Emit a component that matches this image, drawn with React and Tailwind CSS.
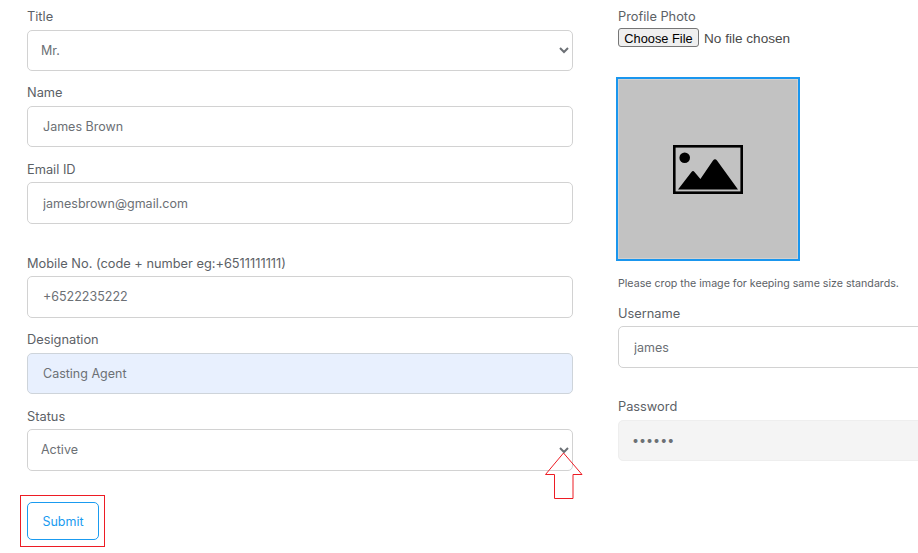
import React from "react";

function Label({ children }) {
  return <label className="block text-[12.8px] leading-[20px] text-[#5c6166]">{children}</label>;
}

function TextInput({ value, tone = "plain", type = "text", extra = "h-[41px]" }) {
  const toneClass =
    tone === "blue"
      ? "bg-[#e8f0fe] border-[#ced4da]"
      : tone === "gray"
      ? "bg-[#f4f4f4] border-[#eeeeee]"
      : "bg-white border-[#d2d2d2]";
  return (
    <input
      readOnly
      type={type}
      value={value}
      className={`block w-full rounded-[5px] border pr-[15px] text-[12.5px] text-[#6c7075] outline-none ${toneClass} ${extra}`}
    />
  );
}

function SelectBox({ value, options, extra = "h-[41px]" }) {
  return (
    <select
      defaultValue={value}
      className={`block w-full rounded-[5px] border border-[#d2d2d2] bg-white pl-[9px] pr-[4px] text-[12.5px] text-[#6c7075] outline-none ${extra}`}
    >
      {options.map((o) => (
        <option key={o}>{o}</option>
      ))}
    </select>
  );
}

function ImageIcon() {
  return (
    <svg width="70" height="49" viewBox="0 0 70 49" aria-hidden="true">
      <rect x="1.3" y="1.3" width="67.4" height="46.4" fill="none" stroke="#000" strokeWidth="2.6" />
      <circle cx="11.7" cy="12.7" r="5.3" fill="#000" />
      <path d="M5 44.5 L18.5 27 Q20 25 21.5 27 L27.4 34 L40 15.5 Q42 13 44 15.5 L65 44.5 Z" fill="#000" />
    </svg>
  );
}

export default function App() {
  return (
    <div className="relative h-[553px] w-[918px] overflow-hidden bg-white font-['Inter',sans-serif]">
      <div className="flex pt-[7px]">
        <div className="ml-[27px] w-[546px] shrink-0">
          <Label>Title</Label>
          <div className="mt-[3px]">
            <SelectBox value="Mr." options={["Mr.", "Mrs.", "Ms."]} />
          </div>
          <div className="mt-[12px]"><Label>Name</Label></div>
          <div className="mt-[3px]"><TextInput value="James Brown" extra="h-[41px] pl-[15px]" /></div>
          <div className="mt-[13px]"><Label>Email ID</Label></div>
          <div className="mt-[2px]"><TextInput value="jamesbrown@gmail.com" extra="h-[42px] pl-[15px]" /></div>
          <div className="mt-[30px]"><Label>Mobile No. (code + number eg:+6511111111)</Label></div>
          <div className="mt-[2px]"><TextInput value="+6522235222" extra="h-[42px] pl-[15px] pb-[2px]" /></div>
          <div className="mt-[12px]"><Label>Designation</Label></div>
          <div className="mt-[3px]"><TextInput value="Casting Agent" tone="blue" extra="h-[41px] pl-[15px]" /></div>
          <div className="mt-[13px]"><Label>Status</Label></div>
          <div className="mt-[2px]">
            <SelectBox value="Active" options={["Active", "Inactive"]} extra="h-[42px] pb-[2px]" />
          </div>
          <button className="mt-[31px] block h-[38px] w-[72px] rounded-[5px] border border-[#1a9bf0] bg-white pt-[2px] text-[12.5px] text-[#1a9bf0]">
            Submit
          </button>
        </div>

        <div className="ml-[45px] w-[400px] shrink-0">
          <Label>Profile Photo</Label>
          <input
            type="file"
            className="mt-[1px] block h-[21px] w-[300px] font-['Liberation_Sans',sans-serif] text-[13.6px] leading-[19px] text-[#4a4a4a] file:mr-[5px] file:h-[19px] file:w-[81px] file:rounded-[3px] file:border file:border-[#767676] file:bg-[#efefef] file:p-0 file:text-[12.8px] file:text-black"
          />
          <div className="-ml-[2px] mt-[28px] flex h-[184px] w-[184px] items-center justify-center border-2 border-[#1a96ee] bg-[#c2c2c2] outline outline-1 -outline-offset-3 outline-[#d0d0d0]">
            <ImageIcon />
          </div>
          <p className="mt-[15px] text-[10.65px] leading-[16px] text-[#5c6166]">
            Please crop the image for keeping same size standards.
          </p>
          <div className="mt-[12px]"><Label>Username</Label></div>
          <div className="mt-[2px]"><TextInput value="james" extra="h-[42px] pl-[15px]" /></div>
          <div className="mt-[29px]"><Label>Password</Label></div>
          <div className="mt-[3px]"><TextInput value="123456" type="password" tone="gray" extra="h-[41px] pl-[13px]" /></div>
        </div>
      </div>

      {/* Annotations drawn on top of the screenshot */}
      <div className="absolute left-[20px] top-[495px] h-[52px] w-[85px] border border-[#ed1c24]" />
      <svg className="absolute left-[540px] top-[445px]" width="48" height="58" viewBox="0 0 48 58" aria-hidden="true">
        <path d="M5.5 29.5 L23.5 8 L42 29.5 L33 29.5 L33 53.5 L14.5 53.5 L14.5 29.5 Z" fill="none" stroke="#ed1c24" strokeWidth="1" />
      </svg>
    </div>
  );
}
